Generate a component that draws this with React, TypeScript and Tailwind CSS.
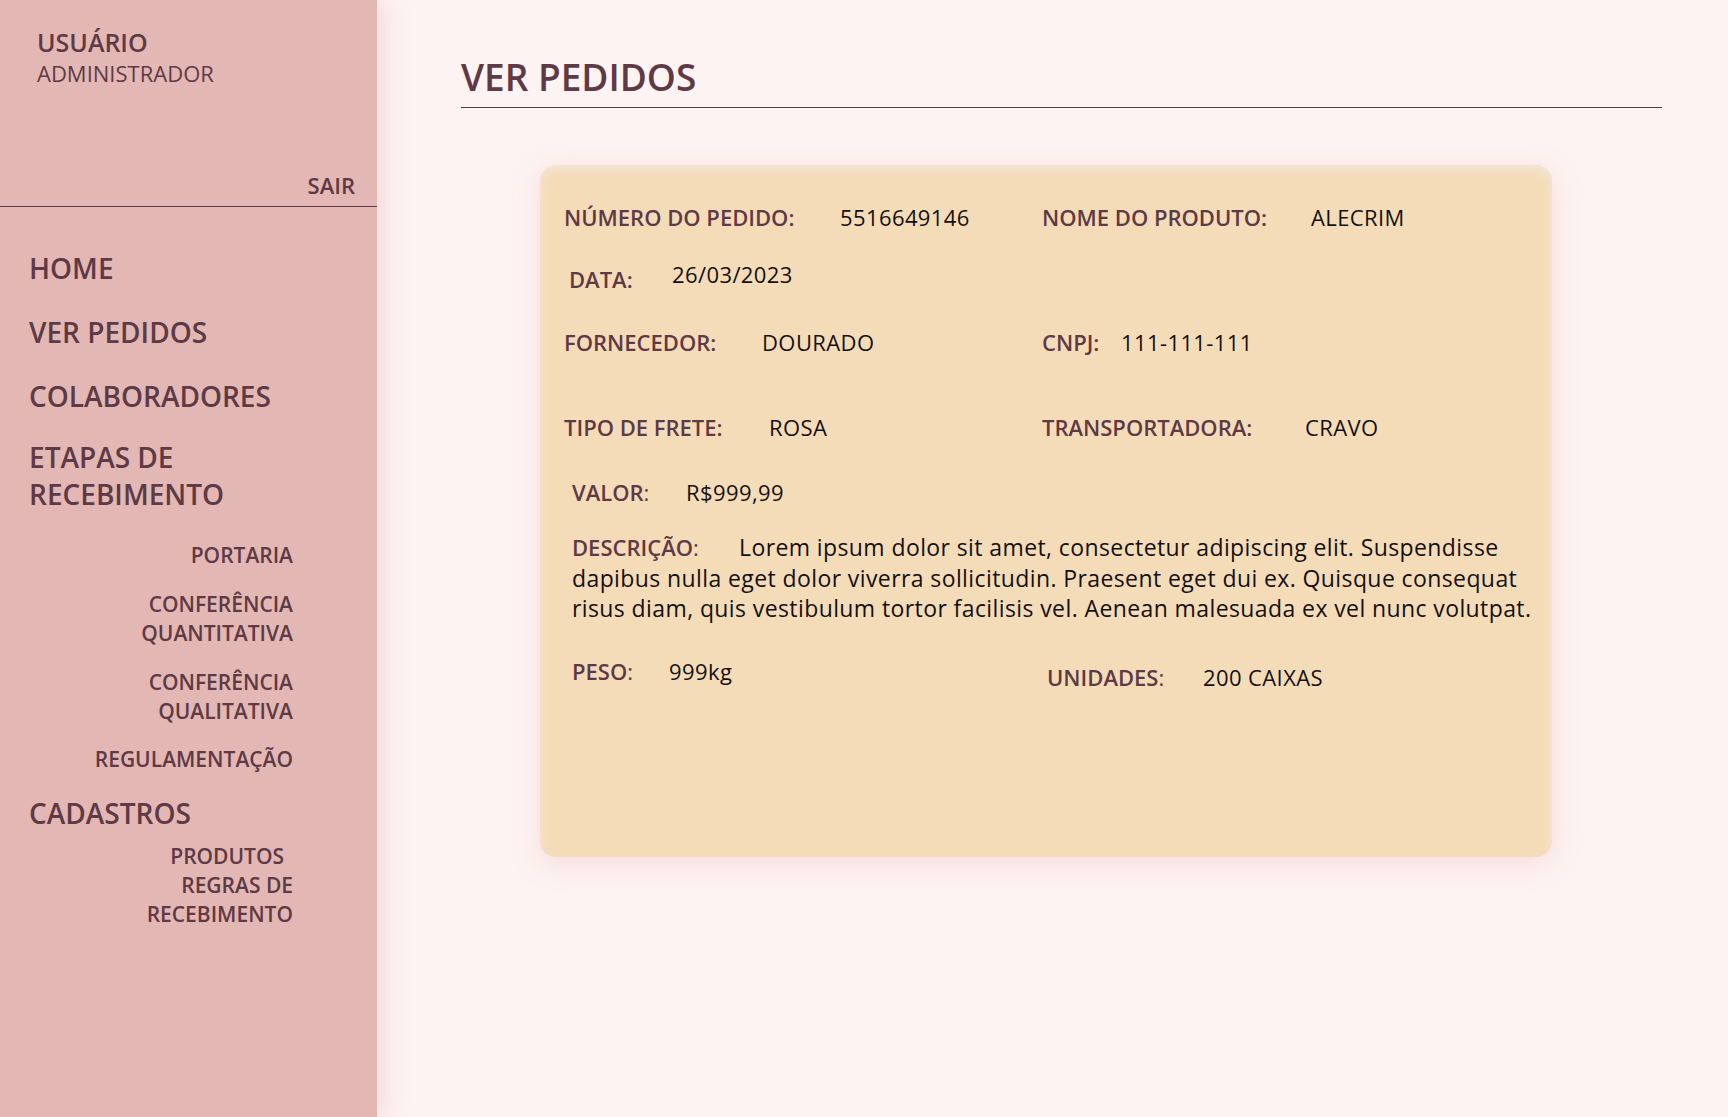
import React from "react";

const C = "text-[#5d3a45]";

function Label({ w, children, colon = true, thinColon = false, className = "" }: { w: number; children: React.ReactNode; colon?: boolean; thinColon?: boolean; className?: string }) {
  return (
    <span className={`inline-block shrink-0 font-semibold text-[22px] tracking-normal ${C} ${className}`} style={{ width: w }}>
      {children}
      {colon && (thinColon ? <span className="font-normal">:</span> : ":")}
    </span>
  );
}

function Value({ children, className = "" }: { children: React.ReactNode; className?: string }) {
  return <span className={`text-[22px] tracking-[0.4px] text-[#141010] ${className}`}>{children}</span>;
}

export default function App() {
  return (
    <div className="flex min-h-screen bg-[#fdf3f2] font-['Open_Sans',sans-serif]">
      {/* Sidebar */}
      <aside className={`relative z-10 w-[377px] shrink-0 h-[1117px] bg-[#e3b7b3] shadow-[6px_0_22px_rgba(230,185,185,0.45)] ${C}`}>
        <div className="pl-[37px] pt-[26px]">
          <div className="text-[25px] leading-[32px] font-semibold">USUÁRIO</div>
          <div className="mt-px text-[22px] leading-[28px]">ADMINISTRADOR</div>
        </div>
        <div className="mt-[84px] pr-[22px] pb-[7px] text-right text-[22px] leading-[28px] font-semibold border-b border-[#5d3a45]">
          SAIR
        </div>
        <nav className="pl-[29px] font-semibold">
          <div className="mt-[43px] text-[28px] leading-[37px]">HOME</div>
          <div className="mt-[27px] text-[28px] leading-[37px]">VER PEDIDOS</div>
          <div className="mt-[27px] text-[28px] leading-[37px]">COLABORADORES</div>
          <div className="mt-[24px] text-[28px] leading-[37px]">
            ETAPAS DE
            <br />
            RECEBIMENTO
          </div>
          <div className="w-[264px] text-right text-[21px] leading-[29px]">
            <div className="mt-[28px]">PORTARIA</div>
            <div className="mt-[20px]">
              CONFERÊNCIA
              <br />
              QUANTITATIVA
            </div>
            <div className="mt-[20px]">
              CONFERÊNCIA
              <br />
              QUALITATIVA
            </div>
            <div className="mt-[19px]">REGULAMENTAÇÃO</div>
          </div>
          <div className="mt-[21px] text-[28px] leading-[37px]">CADASTROS</div>
          <div className="w-[264px] text-right text-[21px] leading-[29px] mt-[10px]">
            <div className="pr-[9px]">PRODUTOS</div>
            <div>REGRAS DE</div>
            <div>RECEBIMENTO</div>
          </div>
        </nav>
      </aside>

      {/* Main */}
      <main className="flex-1 pl-[84px] pr-[66px]">
        <h1 className={`mt-[55px] pb-[8px] text-[37px] leading-[44px] font-semibold border-b border-[#5d3a45] ${C}`}>
          VER PEDIDOS
        </h1>
        <div className="mt-[57px] ml-[79px] w-[1012px] h-[692px] rounded-[16px] bg-[#f5dcb9] shadow-[0_6px_26px_rgba(235,175,180,0.35),inset_0_5px_8px_rgba(240,235,230,0.7)] pl-[24px] pt-[37px] pr-[18px] leading-[30px]">
          <div className="grid grid-cols-[478px_1fr]">
            <div className="flex">
              <Label w={276}>NÚMERO DO PEDIDO</Label>
              <Value>5516649146</Value>
            </div>
            <div className="flex">
              <Label w={269}>NOME DO PRODUTO</Label>
              <Value>ALECRIM</Value>
            </div>
          </div>
          <div className="mt-[32px] flex pl-[5px] items-start">
            <Label w={103}>DATA</Label>
            <Value className="-mt-[5px]">26/03/2023</Value>
          </div>
          <div className="mt-[33px] grid grid-cols-[478px_1fr]">
            <div className="flex">
              <Label w={198}>FORNECEDOR</Label>
              <Value>DOURADO</Value>
            </div>
            <div className="flex">
              <Label w={79}>CNPJ</Label>
              <Value>111-111-111</Value>
            </div>
          </div>
          <div className="mt-[55px] grid grid-cols-[478px_1fr]">
            <div className="flex">
              <Label w={205}>TIPO DE FRETE</Label>
              <Value>ROSA</Value>
            </div>
            <div className="flex">
              <Label w={263}>TRANSPORTADORA</Label>
              <Value>CRAVO</Value>
            </div>
          </div>
          <div className="mt-[35px] flex pl-[8px]">
            <Label w={114} thinColon>VALOR</Label>
            <Value>R$999,99</Value>
          </div>
          <p className="mt-[25px] pl-[8px] text-[23px] tracking-[0.4px] leading-[30.5px] text-[#141010]">
            <Label w={167} thinColon>DESCRIÇÃO</Label>
            Lorem ipsum dolor sit amet, consectetur adipiscing elit. Suspendisse dapibus nulla eget dolor viverra sollicitudin. Praesent eget dui ex. Quisque consequat risus diam, quis vestibulum tortor facilisis vel. Aenean malesuada ex vel nunc volutpat.
          </p>
          <div className="mt-[32px] grid grid-cols-[478px_1fr] items-start">
            <div className="flex pl-[8px]">
              <Label w={97} thinColon>PESO</Label>
              <Value>999kg</Value>
            </div>
            <div className="flex pl-[5px] mt-[6px]">
              <Label w={156} thinColon>UNIDADES</Label>
              <Value>200 CAIXAS</Value>
            </div>
          </div>
        </div>
      </main>
    </div>
  );
}
